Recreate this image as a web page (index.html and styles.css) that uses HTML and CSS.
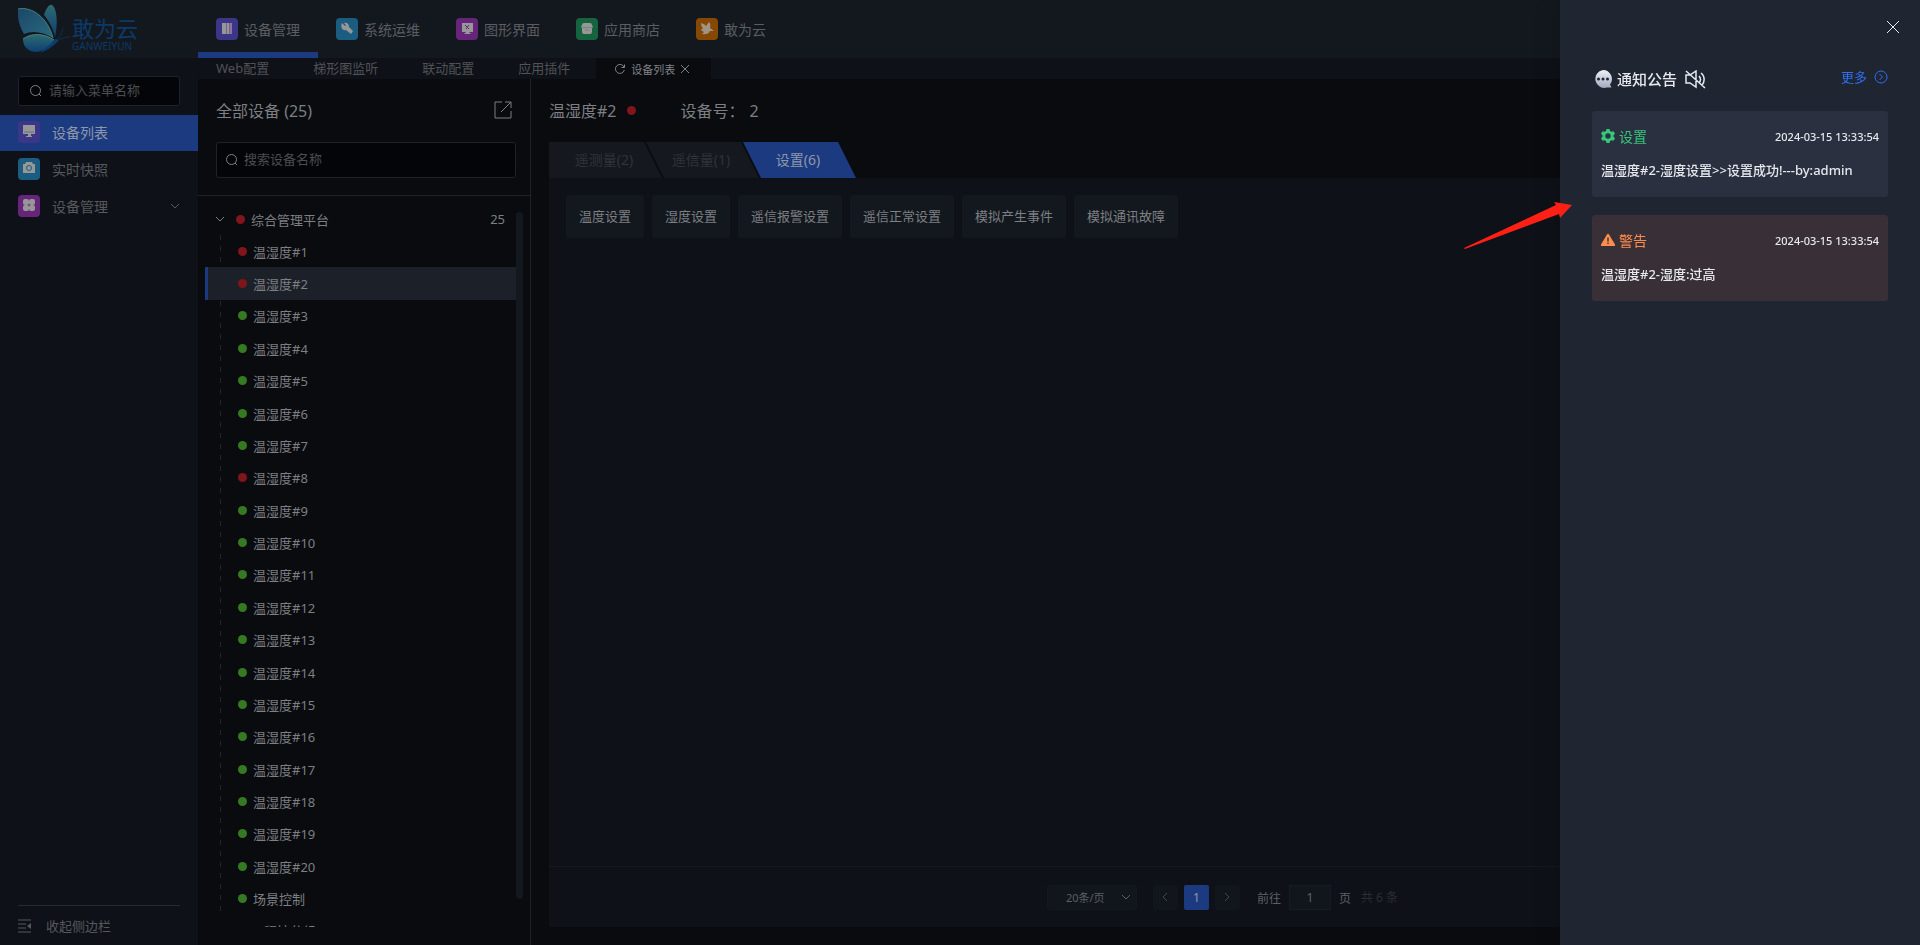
FILE: index.html
```
<!DOCTYPE html>
<html lang="zh-CN">
<head>
    <meta charset="UTF-8">
    <meta name="viewport" content="width=device-width, initial-scale=1.0">
    <title>敢为云 - 设备列表</title>
    <link rel="stylesheet" href="styles.css">
</head>
<body>
<header class="topbar">
    <a class="logo" href="#">
        <svg class="logo-mark" viewBox="0 0 54 50" aria-hidden="true">
            <defs>
                <linearGradient id="wing" x1="0" y1="0" x2="1" y2="1">
                    <stop offset="0" stop-color="#1b4767"/>
                    <stop offset="1" stop-color="#2a6a80"/>
                </linearGradient>
                <linearGradient id="wing2" x1="0" y1="0" x2="0" y2="1">
                    <stop offset="0" stop-color="#2d6b70"/>
                    <stop offset="1" stop-color="#0d3f73"/>
                </linearGradient>
            </defs>
            <path d="M0 5 C14 2 30 14 35 34 C26 28 14 26 6 30 C1 22 -1 12 0 5Z" fill="url(#wing)"/>
            <path d="M26 11 C28 5 31 0 34 1 C39 4 40 20 37 33 C35 24 31 17 26 11Z" fill="url(#wing2)"/>
            <path d="M5 35 C14 28 28 30 36 36 C33 42 25 48 17 48 C9 47 5 42 5 35Z" fill="url(#wing2)"/>
            <path d="M0 5 C14 2 30 14 35 34 M5 35 C14 28 28 30 36 36" fill="none" stroke="#43827d"/>
            <path d="M22 49 C27 44 34 40 37 35 L41 36 C37 41 30 46 22 49Z" fill="#0b3e70"/>
            <path d="M39 35 C43 32 44 28 45 24 M40 36 C44 34 48 33 52 33" fill="none" stroke="#0e3b63" stroke-width=".6"/>
        </svg>
        <span class="logo-text">
            <span class="logo-cn">敢为云</span>
            <span class="logo-en">GANWEIYUN</span>
        </span>
    </a>
    <nav class="main-nav">
        <a class="active" href="#">
            <svg class="tile" viewBox="0 0 22 22"><rect width="22" height="22" rx="4" fill="#3b3688"/><path d="M6 5h4v11H6zM10.500 5h3v11h-3z" fill="#979797"/><path d="M14 5h2v11h-2z" fill="#9b6f9b"/></svg>
            设备管理
        </a>
        <a href="#">
            <svg class="tile" viewBox="0 0 22 22"><rect width="22" height="22" rx="4" fill="#1b5d80"/><path d="M6 5l3 3 1-1-2-2c3-1 5 1 5 4l4 4-2 3-5-4c-3 1-6-2-4-7z" fill="#979797"/></svg>
            系统运维
        </a>
        <a href="#">
            <svg class="tile" viewBox="0 0 22 22"><rect width="22" height="22" rx="4" fill="#66257a"/><path d="M6 5h11v9h-4l2 2H8l2-2H6z" fill="#979797"/><path d="M9 7l4 4M13 7l-3 4" stroke="#66257a"/></svg>
            图形界面
        </a>
        <a href="#">
            <svg class="tile" viewBox="0 0 22 22"><rect width="22" height="22" rx="4" fill="#15633f"/><path d="M8 5h6q2 0 2 2l1 2-1 1v4q0 2-2 2H8q-2 0-2-2v-4L5 9l1-2q0-2 2-2z" fill="#979797"/><path d="M6 9.500h10M9 12h4" stroke="#6b8a7b"/></svg>
            应用商店
        </a>
        <a href="#">
            <svg class="tile" viewBox="0 0 22 22"><rect width="22" height="22" rx="4" fill="#874803"/><path d="M5 5q4 1 5 3l3-4q2 2 1 6l4 3-4 0q-2 4-8 3l2-2q-3-1-3-3l2 0q-2-3-2-6z" fill="#a09487"/></svg>
            敢为云
        </a>
    </nav>
</header>

<div class="layout">
    <aside class="sidebar">
        <label class="search-box menu-search">
            <svg viewBox="0 0 12 12"><circle cx="5.500" cy="5.500" r="5"/><path d="M9 9l2 2"/></svg>
            <input type="text" placeholder="请输入菜单名称" aria-label="请输入菜单名称">
        </label>
        <nav class="menu">
            <a class="active" href="#">
                <svg class="tile" viewBox="0 0 22 22"><rect width="22" height="22" rx="4" fill="#3b3688"/><path d="M5 4h12v9H5zM10 13h3v2h-3zM8 15h6v1H8z" fill="#979797"/><path d="M6 11h10" stroke="#6f6d8d"/></svg>
                <span>设备列表</span>
            </a>
            <a href="#">
                <svg class="tile" viewBox="0 0 22 22"><rect width="22" height="22" rx="4" fill="#1b5d80"/><path d="M5 6h2l1-2h6l1 2h2v9H5z" fill="#979797"/><circle cx="11" cy="10" r="2.500" fill="none" stroke="#1b5d80"/></svg>
                <span>实时快照</span>
            </a>
            <a href="#">
                <svg class="tile" viewBox="0 0 22 22"><rect width="22" height="22" rx="4" fill="#66257a"/><g fill="#979797"><rect x="5" y="4" width="6" height="6" rx="2"/><rect x="11" y="4" width="6" height="6" rx="2"/><rect x="5" y="10" width="6" height="6" rx="2"/><rect x="11" y="10" width="6" height="6" rx="2"/></g></svg>
                <span>设备管理</span>
                <svg class="chevron" viewBox="0 0 10 6"><path d="M1 1l4 4 4-4"/></svg>
            </a>
        </nav>
        <button class="collapse" type="button">
            <svg viewBox="0 0 14 14"><path d="M0 1h13M0 5h8M0 9h8M0 13h13"/><path class="fill" d="M13 4v6l-4-3z"/></svg>
            收起侧边栏
        </button>
    </aside>

    <div class="workspace">
        <div class="page-tabs">
            <a href="#">Web配置</a>
            <a href="#">梯形图监听</a>
            <a href="#">联动配置</a>
            <a href="#">应用插件</a>
            <div class="page-tab-active">
                <svg viewBox="0 0 10 10"><path d="M9 3a4.500 4.500 0 1 0 .3 3M9.500 .5v3h-3"/></svg>
                <a href="#">设备列表</a>
                <button type="button" aria-label="关闭"><svg viewBox="0 0 8 8"><path d="M0 0l8 8M8 0L0 8"/></svg></button>
            </div>
        </div>

        <div class="content">
            <section class="devices">
                <div class="devices-head">
                    <h2>全部设备 (25)</h2>
                    <button class="open" type="button" aria-label="导出">
                        <svg viewBox="0 0 18 18"><path d="M8 1H1v16h16v-7M11 1h6v6M17 1L7 11"/></svg>
                    </button>
                </div>
                <label class="search-box device-search">
                    <svg viewBox="0 0 12 12"><circle cx="5.500" cy="5.500" r="5"/><path d="M9 9l2 2"/></svg>
                    <input type="text" placeholder="搜索设备名称" aria-label="搜索设备名称">
                </label>
                <div class="tree">
                    <div class="tree-main">
                        <div class="tree-root">
                            <svg class="chevron" viewBox="0 0 10 6"><path d="M1 1l4 4 4-4"/></svg>
                            <i class="dot red"></i>
                            <span>综合管理平台</span>
                            <span class="count">25</span>
                        </div>
                        <ul class="tree-list">
                            <li><i class="dot red"></i>温湿度#1</li>
                            <li class="selected"><i class="dot red"></i>温湿度#2</li>
                            <li><i class="dot"></i>温湿度#3</li>
                            <li><i class="dot"></i>温湿度#4</li>
                            <li><i class="dot"></i>温湿度#5</li>
                            <li><i class="dot"></i>温湿度#6</li>
                            <li><i class="dot"></i>温湿度#7</li>
                            <li><i class="dot red"></i>温湿度#8</li>
                            <li><i class="dot"></i>温湿度#9</li>
                            <li><i class="dot"></i>温湿度#10</li>
                            <li><i class="dot"></i>温湿度#11</li>
                            <li><i class="dot"></i>温湿度#12</li>
                            <li><i class="dot"></i>温湿度#13</li>
                            <li><i class="dot"></i>温湿度#14</li>
                            <li><i class="dot"></i>温湿度#15</li>
                            <li><i class="dot"></i>温湿度#16</li>
                            <li><i class="dot"></i>温湿度#17</li>
                            <li><i class="dot"></i>温湿度#18</li>
                            <li><i class="dot"></i>温湿度#19</li>
                            <li><i class="dot"></i>温湿度#20</li>
                            <li><i class="dot"></i>场景控制</li>
                        </ul>
                        <div class="tree-next">程控分组</div>
                    </div>
                    <div class="scrollbar"></div>
                </div>
            </section>

            <main class="detail">
                <div class="detail-head">
                    <h2>温湿度#2</h2>
                    <i class="dot red"></i>
                    <p>设备号：<span>2</span></p>
                </div>
                <div class="tabs">
                    <button type="button">遥测量(2)</button>
                    <button type="button">遥信量(1)</button>
                    <button class="active" type="button">设置(6)</button>
                </div>
                <div class="panel">
                    <div class="commands">
                        <button type="button">温度设置</button>
                        <button type="button">湿度设置</button>
                        <button type="button">遥信报警设置</button>
                        <button type="button">遥信正常设置</button>
                        <button type="button">模拟产生事件</button>
                        <button type="button">模拟通讯故障</button>
                    </div>
                    <div class="pagination">
                        <div class="page-size">
                            <select aria-label="每页条数"><option>20条/页</option></select>
                            <svg class="chevron" viewBox="0 0 10 6"><path d="M1 1l4 4 4-4"/></svg>
                        </div>
                        <div class="pages">
                            <button type="button" aria-label="上一页"><svg viewBox="0 0 6 10"><path d="M5 1L1 5l4 4"/></svg></button>
                            <button class="current" type="button">1</button>
                            <button type="button" aria-label="下一页"><svg viewBox="0 0 6 10"><path d="M1 1l4 4-4 4"/></svg></button>
                        </div>
                        <label class="jump">前往<input type="text" value="1">页</label>
                        <span class="total">共 6 条</span>
                    </div>
                </div>
            </main>
        </div>
    </div>
</div>

<!-- Notification drawer -->
<aside class="drawer">
    <button class="drawer-close" type="button" aria-label="关闭">
        <svg viewBox="0 0 12 12"><path d="M0 0l12 12M12 0L0 12"/></svg>
    </button>
    <div class="drawer-head">
        <svg class="bubble" viewBox="0 0 18 18">
            <defs><linearGradient id="bubble" x1="0" y1="0" x2="0" y2="1"><stop offset="0" stop-color="#f0f1f6"/><stop offset="1" stop-color="#a3aabf"/></linearGradient></defs>
            <path d="M9 0a9 9 0 1 0 4 17.500h4.500l-1.500-3A9 9 0 0 0 9 0z" fill="url(#bubble)"/>
            <circle cx="4.500" cy="9" r="1.500" fill="#1f2531"/><circle cx="9" cy="9" r="1.500" fill="#1f2531"/><circle cx="13.500" cy="9" r="1.500" fill="#1f2531"/>
        </svg>
        <h2>通知公告</h2>
        <button class="mute" type="button" aria-label="静音">
            <svg viewBox="0 0 21 19"><path d="M1 5h4l6-4v16l-6-4H1zM14 6c2 2 2 5 0 7M16 3c4 3 4 9 1 12M1 1l19 17"/></svg>
        </button>
        <a class="more" href="#">更多
            <svg viewBox="0 0 14 14"><circle cx="7" cy="7" r="6"/><path d="M5.500 4l3 3-3 3"/></svg>
        </a>
    </div>
    <article class="notice">
        <div class="notice-head">
            <svg viewBox="0 0 14 14"><path fill="#35c77a" fill-rule="evenodd" d="M5.500 0h3l.5 2 1.500.8 2-.6 1.500 2.600L12.500 6.200v1.600L14 9.200l-1.500 2.600-2-.6-1.500.8-.5 2h-3L5 12l-1.500-.8-2 .6L0 9.200l1.500-1.400V6.200L0 4.800l1.500-2.600 2 .6L5 2zM7 4.300a2.700 2.700 0 1 0 0 5.400a2.700 2.700 0 1 0 0-5.400z"/></svg>
            <h3>设置</h3>
            <time>2024-03-15 13:33:54</time>
        </div>
        <p>温湿度#2-湿度设置&gt;&gt;设置成功!---by:admin</p>
    </article>
    <article class="notice warning">
        <div class="notice-head">
            <svg viewBox="0 0 14 14"><path fill="#ff8d4d" d="M6 1.500q1-1.500 2 0l6 10q.5 1.500-1 1.500H1q-1.500 0-1-1.500z"/><path d="M7 4.500v4M7 9.500v1.500" stroke="#382f37" stroke-width="1.400"/></svg>
            <h3>警告</h3>
            <time>2024-03-15 13:33:54</time>
        </div>
        <p>温湿度#2-湿度:过高</p>
    </article>
</aside>

<svg class="pointer" viewBox="0 0 108 47" aria-hidden="true"><path d="M0 46L92 3L90 0L108 3L96 16L95 12L1 47z" fill="#ff2015"/></svg>
</body>
</html>
```
FILE: styles.css
```
* {
    margin: 0;
    padding: 0;
    box-sizing: border-box;
}
body {
    font-family: "Noto Sans", "Noto Sans CJK SC", sans-serif;
    font-size: 13px;
    color: #7d7f82;
    background: #090b0f;
    height: 100vh;
    display: flex;
    flex-direction: column;
    overflow: hidden;
}
a {
    color: inherit;
    text-decoration: none;
}
button, input, select {
    font: inherit;
    color: inherit;
    background: none;
    border: none;
    outline: none;
}
button {
    cursor: pointer;
}
h2, h3 {
    font-weight: normal;
}
svg {
    fill: none;
    stroke: currentColor;
    flex: none;
}
.tile {
    width: 22px;
    height: 22px;
    stroke: none;
}
.chevron {
    width: 10px;
    height: 6px;
}
.dot {
    width: 9px;
    height: 9px;
    border-radius: 50%;
    background: #357a22;
    flex: none;
}
.dot.red {
    background: #80151b;
}

/* top bar */
.topbar {
    display: flex;
    height: 58px;
    background: #13181f;
    flex: none;
}
.logo {
    display: flex;
    width: 198px;
    padding: 4px 0 0 18px;
}
.logo-mark {
    width: 54px;
    height: 50px;
    stroke: none;
}
.logo-text {
    display: flex;
    flex-direction: column;
    color: #0c3a68;
    padding-top: 12px;
}
.logo-cn {
    font-size: 22px;
    line-height: 25px;
}
.logo-en {
    font-size: 10px;
    line-height: 10px;
}
.main-nav {
    display: flex;
    font-size: 14px;
    color: #5a5d61;
}
.main-nav a {
    display: flex;
    align-items: center;
    gap: 6px;
    padding: 6px 18px 0;
    border-bottom: 6px solid transparent;
}
.main-nav .active {
    border-bottom-color: #1c3a80;
}

.layout {
    display: flex;
    flex: 1;
    min-height: 0;
}

/* left menu */
.sidebar {
    width: 198px;
    flex: none;
    display: flex;
    flex-direction: column;
    background: #0e1118;
    padding-top: 18px;
}
.search-box {
    display: flex;
    align-items: center;
    border: 1px solid #1c212a;
    border-radius: 3px;
    background: #040508;
}
.search-box svg {
    width: 12px;
    height: 12px;
}
.search-box input {
    flex: 1;
    min-width: 0;
    padding-bottom: 3px;
}
.search-box input::placeholder {
    color: #4a4d51;
}
.menu-search {
    height: 30px;
    margin: 0 18px 9px;
    padding-left: 11px;
    gap: 7px;
}
.menu {
    flex: 1;
    font-size: 14px;
    color: #56595d;
}
.menu a {
    display: flex;
    align-items: center;
    height: 36px;
    margin-bottom: 1px;
    padding: 0 18px 2px;
    gap: 12px;
}
.menu .active {
    background: #1c3a80;
    color: #8e97a9;
}
.menu .chevron {
    margin-left: auto;
}
.collapse {
    display: flex;
    align-items: center;
    gap: 14px;
    height: 40px;
    margin: 0 18px;
    border-top: 1px solid #26292f;
    color: #55585c;
}
.collapse svg {
    width: 14px;
    height: 14px;
}
.collapse .fill {
    fill: currentColor;
    stroke: none;
}

/* opened pages */
.workspace {
    flex: 1;
    min-width: 0;
    display: flex;
    flex-direction: column;
}
.page-tabs {
    display: flex;
    align-items: center;
    height: 21px;
    flex: none;
    gap: 44px;
    padding: 0 18px 2px;
    background: #0e1118;
    color: #505256;
}
.page-tab-active {
    display: flex;
    align-items: center;
    gap: 6px;
    height: 21px;
    margin: 2px 0 0 -18px;
    padding: 0 22px 0 19px;
    background: #090b0f;
    color: #808285;
    font-size: 11px;
}
.page-tab-active svg {
    display: block;
    width: 10px;
    height: 10px;
}
.page-tab-active button svg {
    width: 8px;
    height: 8px;
}
.content {
    display: flex;
    flex: 1;
    min-height: 0;
}

/* device tree */
.devices {
    width: 333px;
    flex: none;
    display: flex;
    flex-direction: column;
    border-right: 1px solid #1c222b;
    padding-bottom: 18px;
}
.devices-head {
    display: flex;
    align-items: center;
    justify-content: space-between;
    height: 63px;
    padding: 0 18px 1px;
}
.devices-head h2, .detail-head, .detail-head h2 {
    font-size: 16px;
}
.open svg {
    display: block;
    width: 18px;
    height: 18px;
}
.device-search {
    height: 36px;
    margin: 0 14px 17px 18px;
    padding-left: 9px;
    gap: 6px;
}
.tree {
    display: flex;
    flex: 1;
    min-height: 0;
    border-top: 1px solid #20232a;
    padding: 7px 7px 0 7px;
}
.tree-main {
    flex: 1;
    display: flex;
    flex-direction: column;
}
.tree-root {
    display: flex;
    align-items: center;
    height: 32px;
    padding: 0 11px 0 10px;
}
.tree-root .dot {
    margin: 0 6px 0 11px;
}
.count {
    margin-left: auto;
    font-size: 13px;
}
.tree-list {
    flex: 1;
    display: flex;
    flex-direction: column;
    list-style: none;
    background: repeating-linear-gradient(#22252b 0 5px, transparent 5px 11px) 15px 0 / 1px 100% no-repeat;
}
.tree-list li {
    flex: 1;
    display: flex;
    align-items: center;
    gap: 6px;
    padding-left: 30px;
    border-left: 3px solid transparent;
}
.tree-list .selected {
    background: #1c2029;
    border-left-color: #1c3a80;
}
.tree-next {
    height: 12px;
    padding: 6px 0 0 59px;
    overflow: hidden;
}
.scrollbar {
    width: 7px;
    margin: 9px 0 28px;
    border-radius: 4px;
    background: #13181f;
}

/* device detail */
.detail {
    flex: 1;
    min-width: 0;
    display: flex;
    flex-direction: column;
    padding: 0 18px 18px;
}
.detail-head {
    display: flex;
    align-items: center;
    height: 63px;
    padding-bottom: 1px;
}
.detail-head .dot {
    margin: 0 45px 0 10px;
}
.detail-head span {
    margin-left: 5px;
}
.tabs {
    display: flex;
}
.tabs button {
    width: 114px;
    height: 36px;
    margin-right: -17px;
    padding: 0 4px 2px 0;
    font-size: 14px;
    color: #303338;
    background: #15181f;
    clip-path: polygon(0 0, 95px 0, 113px 100%, 18px 100%);
}
.tabs button:first-child {
    clip-path: polygon(0 0, 95px 0, 113px 100%, 0 100%);
}
.tabs .active {
    background: #1c3a80;
    color: #8e97a9;
}
.panel {
    flex: 1;
    display: flex;
    flex-direction: column;
    background: #0e1118;
}
.commands {
    flex: 1;
    display: flex;
    align-items: flex-start;
    gap: 8px;
    padding: 17px;
}
.commands button {
    height: 43px;
    padding: 0 13px 2px;
    border-radius: 3px;
    background: #13181f;
}
.pagination {
    display: flex;
    align-items: center;
    justify-content: center;
    height: 61px;
    padding-right: 6px;
    border-top: 1px solid #151920;
    font-size: 12px;
    color: #5c5f63;
}
.page-size {
    display: flex;
    align-items: center;
    width: 90px;
    height: 25px;
    padding: 0 5px 0 18px;
    border: 1px solid #13181f;
    border-radius: 3px;
    background: #11151c;
    font-size: 11px;
}
.page-size select {
    appearance: none;
    flex: 1;
    min-width: 0;
}
.pages {
    display: flex;
    gap: 6px;
    margin: 0 17px 0 16px;
}
.pages button {
    width: 25px;
    height: 25px;
    border-radius: 2px;
    background: #11151c;
    color: #43464b;
}
.pages svg {
    width: 6px;
    height: 10px;
}
.pages .current {
    background: #1c3a80;
    color: #8e97a9;
}
.jump input {
    width: 42px;
    height: 25px;
    margin: 0 8px;
    border: 1px solid #171b22;
    background: #11151c;
    text-align: center;
    font-size: 13px;
}
.total {
    margin-left: 10px;
    color: #2b2e33;
}

/* drawer */
.drawer {
    position: fixed;
    top: 0;
    right: 0;
    bottom: 0;
    width: 360px;
    padding: 20px 32px;
    display: flex;
    flex-direction: column;
    background: #1f2531;
    box-shadow: 0 0 24px rgba(0, 0, 0, 0.2);
    color: #e6e8ee;
}
.drawer-close {
    align-self: flex-end;
    margin-right: -12px;
    padding: 1px;
}
.drawer-close svg {
    display: block;
    width: 12px;
    height: 12px;
}
.drawer-head {
    display: flex;
    align-items: center;
    height: 24px;
    margin: 33px 0 20px;
    padding-left: 2px;
}
.drawer-head h2 {
    margin: 0 8px 0 5px;
    padding-bottom: 2px;
    font-size: 15px;
    font-weight: 500;
}
.bubble {
    width: 18px;
    height: 18px;
    stroke: none;
}
.mute svg {
    display: block;
    width: 21px;
    height: 19px;
    stroke-width: 1.5;
}
.more {
    display: flex;
    align-items: center;
    align-self: flex-start;
    gap: 7px;
    margin-left: auto;
    color: #2f6ef0;
}
.more svg {
    width: 14px;
    height: 14px;
}
.notice {
    height: 86px;
    margin-bottom: 18px;
    padding: 15px 9px;
    border-radius: 3px;
    background: #2a303f;
}
.notice.warning {
    background: #382f37;
}
.notice-head {
    display: flex;
    align-items: center;
    gap: 4px;
    height: 20px;
    margin-bottom: 14px;
}
.notice-head svg {
    width: 14px;
    height: 14px;
    stroke: none;
}
.notice h3 {
    font-size: 14px;
    color: #35c77a;
}
.notice.warning h3 {
    color: #ff8d4d;
}
.notice time {
    margin-left: auto;
    font-size: 11px;
    font-weight: 500;
}
.notice p {
    line-height: 20px;
    font-weight: 500;
}
.pointer {
    position: absolute;
    top: 202px;
    right: 348px;
    width: 108px;
    height: 47px;
    stroke: none;
}
```
